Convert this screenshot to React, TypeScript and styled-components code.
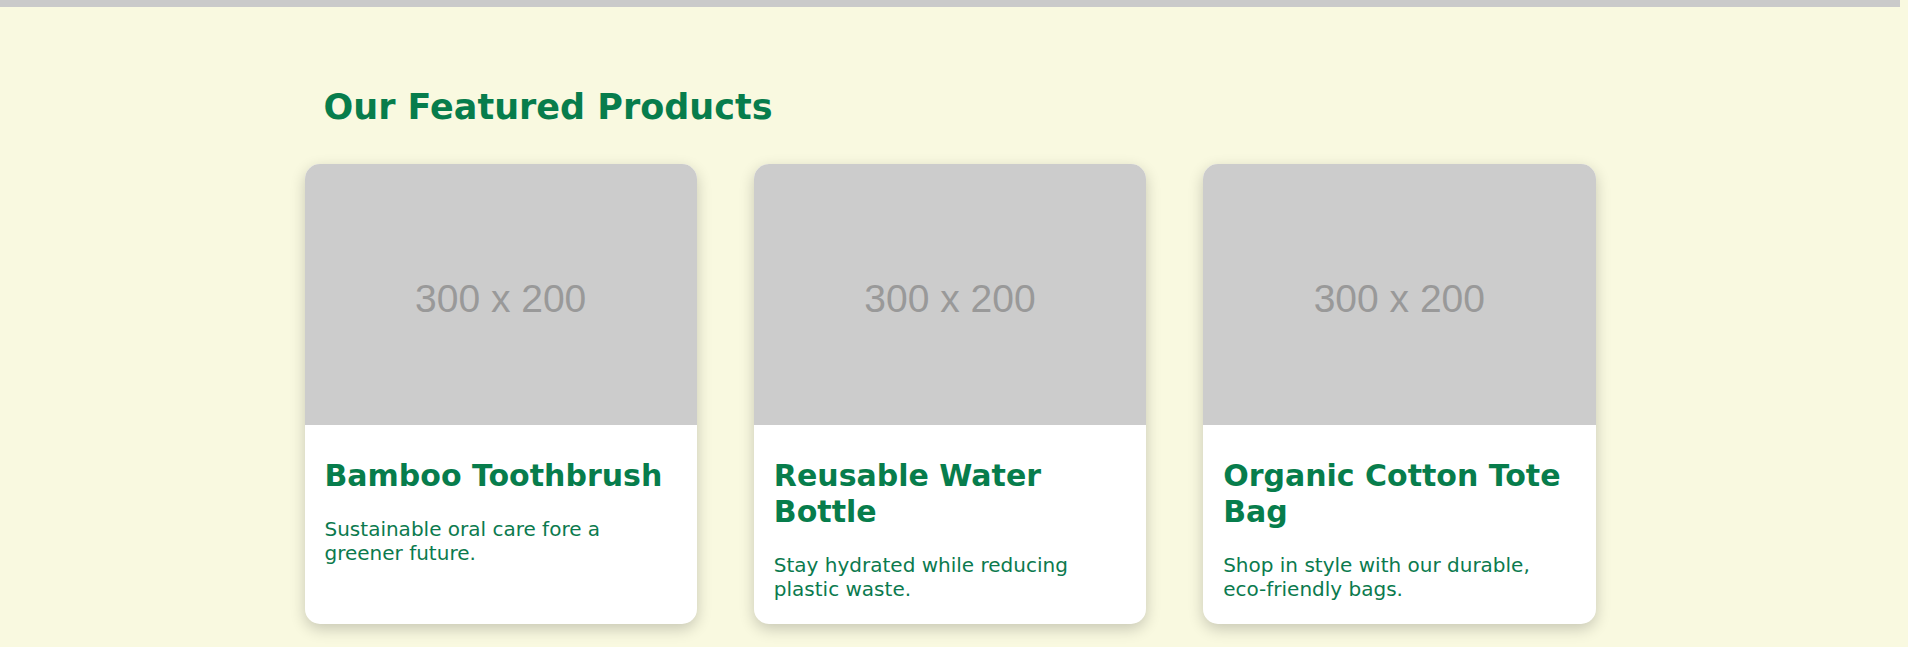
import * as React from 'react';
import styled, { createGlobalStyle } from 'styled-components';

const GlobalStyle = createGlobalStyle`
    html {
        background: #f9f9e0;
    }

    html::-webkit-scrollbar {
        width: 8px;
        background: #f1f1f1;
    }

    html::-webkit-scrollbar-thumb {
        background: #c1c1c1;
        border-left: 1px solid #f1f1f1;
    }

    body {
        margin: 0 8px 0 0;
        background: #f9f9e0;
        font-family: "DejaVu Sans", Verdana, sans-serif;
        color: #077d4c;
    }
`;

const Hero = styled.div`
    height: 180px;
    background: #cacaca;
`;

const FeaturedSection = styled.section`
    padding: 78px 0 33px;
`;

const Container = styled.div`
    width: 1291px;
    margin: 0 auto;
`;

const SectionTitle = styled.h2`
    margin: 0 0 35px;
    padding-left: 19px;
    font-size: 35px;
    line-height: 44px;
    font-weight: bold;
    color: #077d4c;
`;

const ProductGrid = styled.div`
    display: grid;
    grid-template-columns: repeat(3, 1fr);
    column-gap: 57px;
`;

const ProductCard = styled.article`
    display: flex;
    flex-direction: column;
    background: #ffffff;
    border-radius: 15px;
    overflow: hidden;
    box-shadow: 0 5px 15px rgba(0, 0, 0, 0.2);
`;

const Placeholder = styled.div`
    display: flex;
    align-items: center;
    justify-content: center;
    height: 261px;
    padding-top: 8px;
    box-sizing: border-box;
    background: #cccccc;
    color: #999999;
    font-family: "Liberation Sans", Arial, sans-serif;
    font-size: 39px;
`;

const CardBody = styled.div`
    padding: 33px 20px 22px;
`;

const ProductName = styled.h3`
    margin: 0 0 23px;
    font-size: 30px;
    line-height: 36px;
    font-weight: bold;
    color: #077d4c;
`;

const ProductText = styled.p`
    margin: 0;
    font-size: 20px;
    line-height: 24.4px;
    color: #0b7a4e;
`;

interface IProduct {
    name: string;
    text: string;
}

const products: IProduct[] = [
    { name: 'Bamboo Toothbrush', text: 'Sustainable oral care fore a greener future.' },
    { name: 'Reusable Water Bottle', text: 'Stay hydrated while reducing plastic waste.' },
    { name: 'Organic Cotton Tote Bag', text: 'Shop in style with our durable, eco-friendly bags.' }
];

export default function App() {
    React.useEffect(() => {
        window.scrollTo(0, 173);
    }, []);

    return (
        <>
            <GlobalStyle />
            <Hero />
            <FeaturedSection>
                <Container>
                    <SectionTitle>Our Featured Products</SectionTitle>
                    <ProductGrid>
                        {products.map((p) => (
                            <ProductCard key={p.name}>
                                <Placeholder>300 x 200</Placeholder>
                                <CardBody>
                                    <ProductName>{p.name}</ProductName>
                                    <ProductText>{p.text}</ProductText>
                                </CardBody>
                            </ProductCard>
                        ))}
                    </ProductGrid>
                </Container>
            </FeaturedSection>
        </>
    );
}
